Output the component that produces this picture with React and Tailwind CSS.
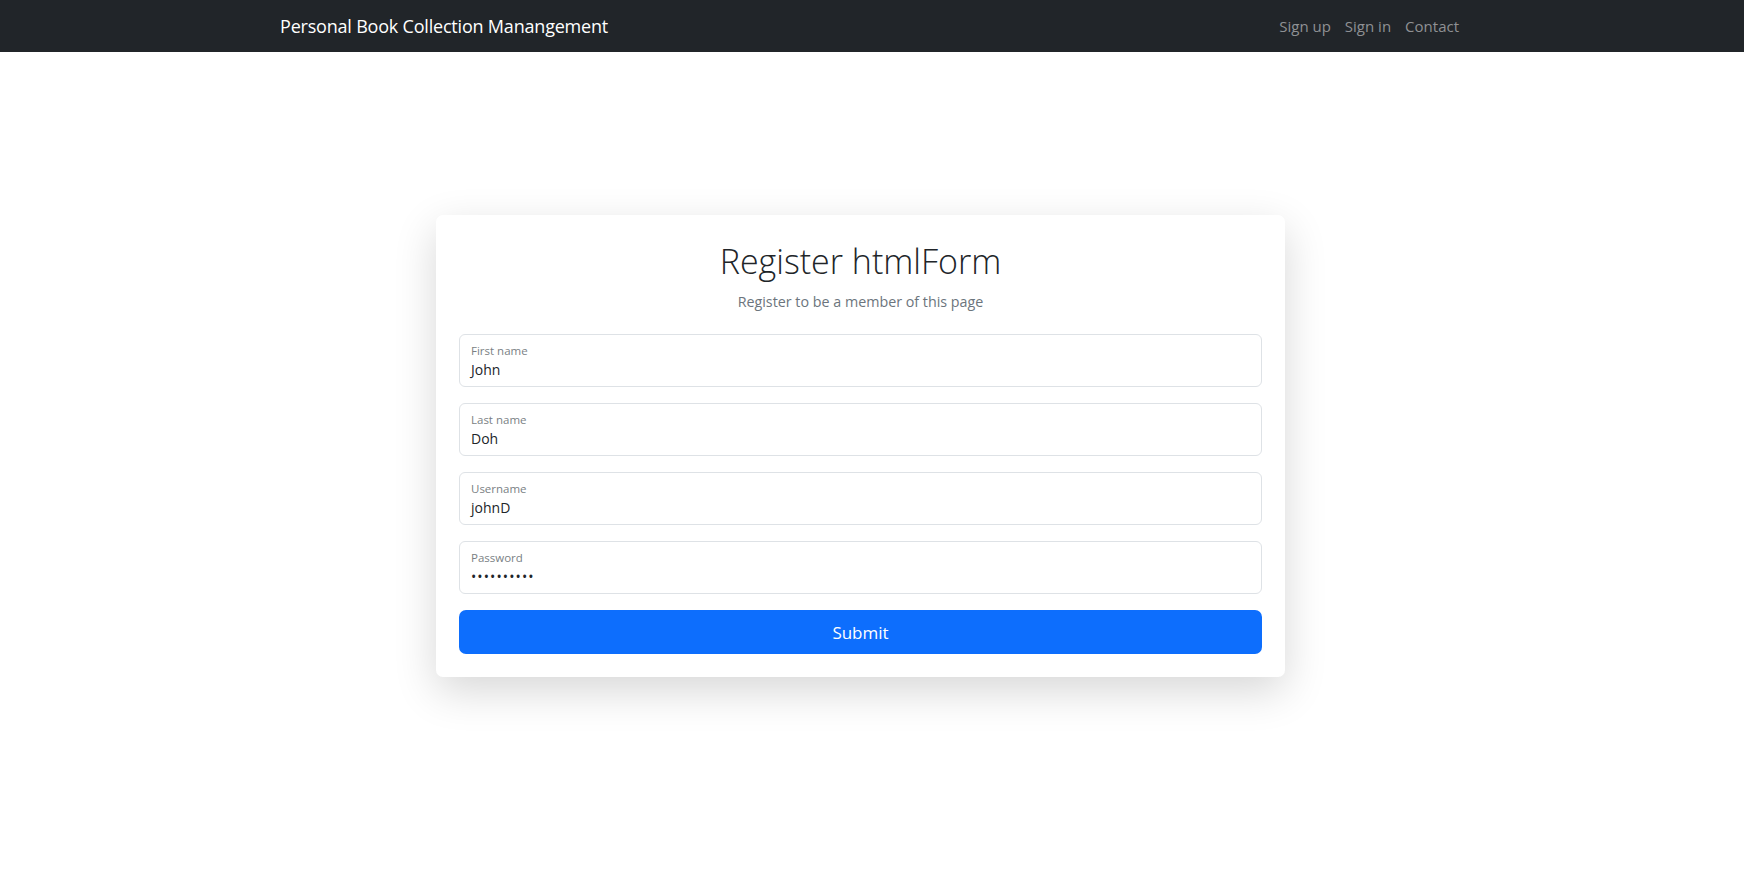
import React from "react";

const fields = [
  { label: "First name", value: "John" },
  { label: "Last name", value: "Doh" },
  { label: "Username", value: "johnD" },
  { label: "Password", value: "••••••••••", secret: true },
];

const App = () => {
  return (
    <div className="min-h-[892px] bg-white font-['Open_Sans',sans-serif] text-[#212529]">
      {/* Navbar */}
      <nav className="h-[52px] bg-[#212529] flex items-center">
        <div className="flex items-center justify-between w-full pl-[280px] pr-[285px]">
          <span className="text-white text-[18px] tracking-[-0.2px]">
            Personal Book Collection Manangement
          </span>
          <div className="flex items-center gap-[14px] text-[15px] text-[#8f9194]">
            <a href="#">Sign up</a>
            <a href="#">Sign in</a>
            <a href="#">Contact</a>
          </div>
        </div>
      </nav>

      {/* Register card */}
      <div className="pt-[163px]">
        <div className="ml-[436px] w-[849px] bg-white rounded-[7px] shadow-[0_14px_43px_rgba(0,0,0,0.16)] px-[23px] pt-[23px] pb-[23px]">
          <div className="text-center">
            <h1 className="text-[34px] font-light leading-[46px] text-[#212529]">
              Register htmlForm
            </h1>
            <p className="mt-[7px] text-[14.3px] text-[#6c757d]">
              Register to be a member of this page
            </p>
          </div>

          <form className="mt-[22px] flex flex-col gap-[16px]">
            {fields.map((f) => (
              <div
                key={f.label}
                className="h-[53px] border border-[#dee2e6] rounded-[6px] px-[11px] pt-[8px]"
              >
                <div className="text-[11.5px] leading-[16px] text-[#7a7f84]">{f.label}</div>
                <div
                  className={
                    f.secret
                      ? "mt-[1px] text-[14px] leading-[20px] tracking-[1.1px] text-[#212529]"
                      : "mt-[1px] text-[14px] leading-[20px] text-[#212529]"
                  }
                >
                  {f.value}
                </div>
              </div>
            ))}
            <button
              type="button"
              className="h-[44px] rounded-[7px] bg-[#0d6efd] text-white text-[17px]"
            >
              Submit
            </button>
          </form>
        </div>
      </div>
    </div>
  );
};

export default App;
